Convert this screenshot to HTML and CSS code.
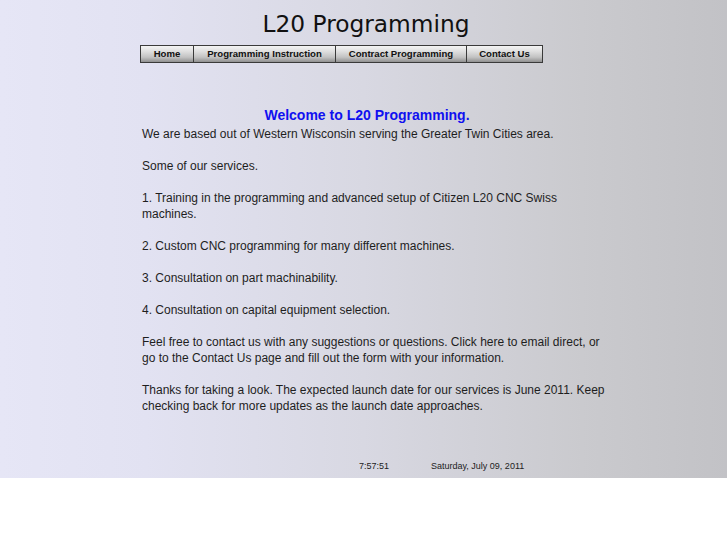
FILE: index.html
```html
<!DOCTYPE html>
<html>
<head>
<meta charset="utf-8">
<link rel="stylesheet" href="styles.css">
</head>
<body>
<div class="page">
  <div class="container">
    <h1 class="title">L20 Programming</h1>
    <div class="nav">
      <a class="btn b1">Home</a>
      <a class="btn b2">Programming Instruction</a>
      <a class="btn b3">Contract Programming</a>
      <a class="btn b4">Contact Us</a>
    </div>
    <h2 class="welcome">Welcome to L20 Programming.</h2>
    <div class="text">
      We are based out of Western Wisconsin serving the Greater Twin Cities area.<br><br>
      Some of our services.<br><br>
      1. Training in the programming and advanced setup of Citizen L20 CNC Swiss machines.<br><br>
      2. Custom CNC programming for many different machines.<br><br>
      3. Consultation on part machinability.<br><br>
      4. Consultation on capital equipment selection.<br><br>
      Feel free to contact us with any suggestions or questions. Click here to email direct, or go to the Contact Us page and fill out the form with your information.<br><br>
      Thanks for taking a look. The expected launch date for our services is June 2011. Keep checking back for more updates as the launch date approaches.
    </div>
    <div class="footer">
      <span class="time">7:57:51</span>
      <span class="date">Saturday, July 09, 2011</span>
    </div>
  </div>
</div>
</body>
</html>
```
FILE: styles.css
```css
html, body {
  margin: 0;
  padding: 0;
  background: #ffffff;
}
.page {
  height: 478px;
  background: linear-gradient(to right, #e6e6f6 0%, #e2e2f2 20%, #d8d8e2 50%, #cacace 80%, #c2c2c6 100%);
  overflow: hidden;
}
.container {
  margin-left: 140px;
  width: 470px;
  padding-top: 9px;
}
.title {
  margin: 0;
  font-family: "DejaVu Sans", sans-serif;
  font-weight: normal;
  font-size: 23.3px;
  line-height: 30px;
  color: #111;
  text-align: center;
  width: 452px;
}
.nav {
  display: flex;
  margin-top: 6px;
  width: 403px;
  height: 18px;
}
.btn {
  display: flex;
  align-items: center;
  justify-content: center;
  box-sizing: border-box;
  height: 18px;
  padding-bottom: 2px;
  border: 1px solid #3a3a3a;
  border-left-width: 0;
  background: linear-gradient(to bottom, #f4f4f4 0%, #dedede 35%, #c2c2c2 70%, #909090 100%);
  font-family: "Liberation Sans", Arial, sans-serif;
  font-weight: bold;
  font-size: 9.6px;
  color: #111;
}
.b1 { width: 54px; border-left-width: 1px; }
.b2 { width: 142px; }
.b3 { width: 131px; }
.b4 { width: 76px; }
.welcome {
  margin: 43px 0 0 0;
  font-family: "Liberation Sans", Arial, sans-serif;
  font-weight: bold;
  font-size: 14px;
  line-height: 18px;
  color: #1010f0;
  text-align: center;
  width: 454px;
}
.text {
  margin-top: 2px;
  padding-left: 2px;
  font-family: "Liberation Sans", Arial, sans-serif;
  font-size: 12px;
  line-height: 16px;
  color: #1e1e1e;
}
.footer {
  display: flex;
  margin-top: 47px;
  padding-left: 219px;
  font-family: "Liberation Sans", Arial, sans-serif;
  font-size: 9px;
  color: #222;
}
.time { width: 72px; }
```
